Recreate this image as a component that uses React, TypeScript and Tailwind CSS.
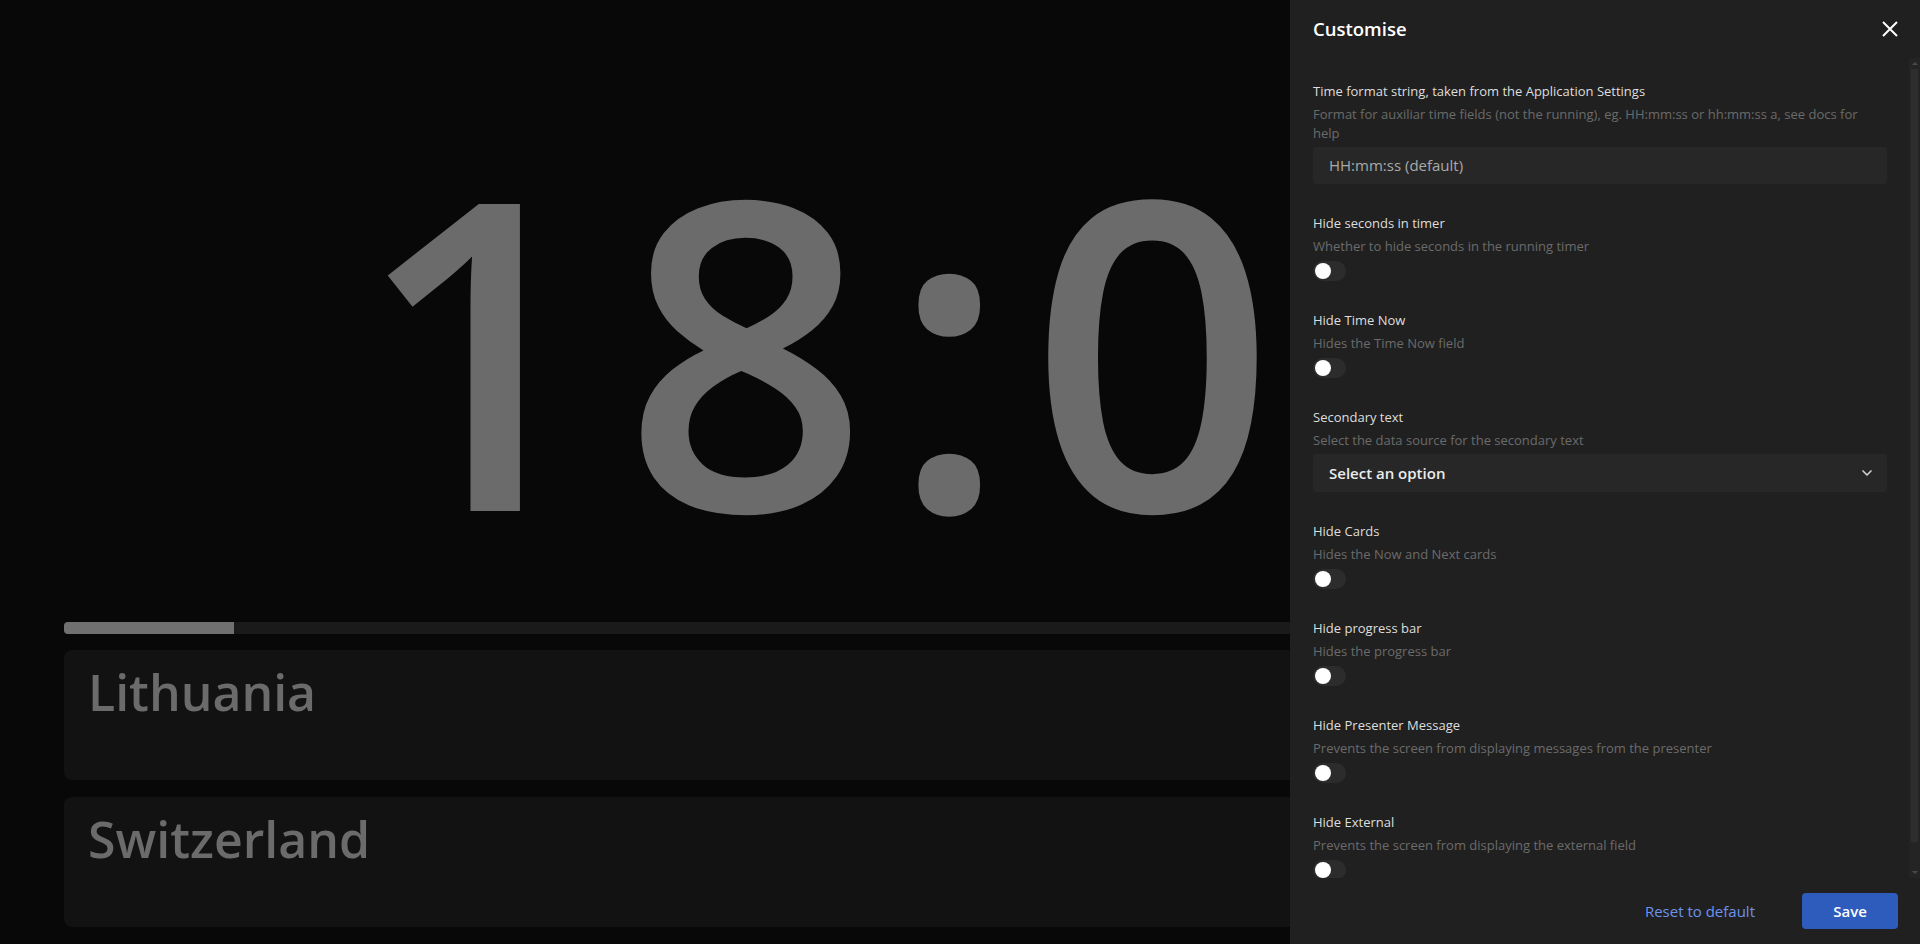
import { ChevronDown } from "lucide-react";

const fields = [
  { label: "Hide seconds in timer", desc: "Whether to hide seconds in the running timer" },
  { label: "Hide Time Now", desc: "Hides the Time Now field" },
];

const moreFields = [
  { label: "Hide Cards", desc: "Hides the Now and Next cards" },
  { label: "Hide progress bar", desc: "Hides the progress bar" },
  { label: "Hide Presenter Message", desc: "Prevents the screen from displaying messages from the presenter" },
  { label: "Hide External", desc: "Prevents the screen from displaying the external field" },
];

const Toggle = () => (
  <div className="mt-[5px] w-[33px] h-[20px] rounded-full bg-[#2c2c2c] flex items-center px-[2px]">
    <div className="w-[16px] h-[16px] rounded-full bg-white" />
  </div>
);

const FieldHead = ({ label, desc }: { label: string; desc: string }) => (
  <>
    <div className="text-[13px] leading-[20px] text-[#dedede]">{label}</div>
    <div className="mt-[4px] text-[13px] leading-[19px] text-[#6b6b6b]">{desc}</div>
  </>
);

const ToggleField = ({ label, desc }: { label: string; desc: string }) => (
  <div className="flex flex-col items-start">
    <FieldHead label={label} desc={desc} />
    <Toggle />
  </div>
);

const Card = ({ title }: { title: string }) => (
  <div className="h-[130px] rounded-lg bg-[#121212] px-6 pt-[5px]">
    <div className="text-[50px] font-semibold text-[#6b6b6b]">{title}</div>
  </div>
);

// drawn scrollbar, the drawer body is clipped like the original
const ScrollBar = () => (
  <div className="w-[11px] shrink-0 bg-[#242424] flex flex-col items-center">
    <div className="h-[11px] flex items-center justify-center">
      <div className="w-0 h-0 border-x-[3px] border-x-transparent border-b-[3px] border-b-[#4a4a4a]" />
    </div>
    <div className="w-[7px] h-[773px] bg-[#2e2e2e]" />
    <div className="flex-1" />
    <div className="h-[11px] flex items-center justify-center">
      <div className="w-0 h-0 border-x-[3px] border-x-transparent border-t-[3px] border-t-[#4a4a4a]" />
    </div>
  </div>
);

const App = () => {
  return (
    <div className="relative h-screen w-full overflow-hidden bg-[#080808] font-['Open_Sans',sans-serif]">
      {/* Timer view */}
      <div className="flex flex-col h-full px-16 pb-[17px]">
        <div className="flex-1 pt-[129px]">
          <div className="text-center text-[430px] leading-none font-semibold tracking-[0.05em] text-[#6b6b6b]">
            18:00
          </div>
        </div>
        <div className="h-3 w-full rounded-sm bg-[#1a1a1a] overflow-hidden">
          <div className="h-full w-[170px] bg-[#707070]" />
        </div>
        <div className="mt-4 flex flex-col gap-[17px]">
          <Card title="Lithuania" />
          <Card title="Switzerland" />
        </div>
      </div>

      {/* Customise drawer */}
      <div className="absolute top-0 right-0 h-full w-[630px] bg-[#202020] flex flex-col">
        <div className="h-[58px] shrink-0 pl-[23px] pr-[22px] flex items-center justify-between">
          <h2 className="text-[18.5px] font-semibold text-white">Customise</h2>
          <svg width="16" height="16" viewBox="0 0 16 16" className="text-white">
            <path d="M1 1L15 15M15 1L1 15" stroke="currentColor" strokeWidth="2" />
          </svg>
        </div>

        <div className="flex-1 min-h-0 flex">
          <div className="flex-1 overflow-hidden pl-[23px] pr-[22px] pt-[23px]">
            <div className="flex flex-col gap-[29px]">
              <div className="flex flex-col">
                <FieldHead
                  label="Time format string, taken from the Application Settings"
                  desc="Format for auxiliar time fields (not the running), eg. HH:mm:ss or hh:mm:ss a, see docs for help"
                />
                <div className="mt-[4px] h-[37px] rounded bg-[#272727] px-4 flex items-center text-[15px] text-[#a9a9a9]">
                  HH:mm:ss (default)
                </div>
              </div>

              {fields.map((f) => (
                <ToggleField key={f.label} {...f} />
              ))}

              <div className="flex flex-col">
                <FieldHead label="Secondary text" desc="Select the data source for the secondary text" />
                <div className="mt-[4px] h-[38px] rounded bg-[#272727] pl-4 pr-3 flex items-center justify-between">
                  <span className="text-[15px] font-semibold text-[#ececec]">Select an option</span>
                  <ChevronDown className="w-4 h-4 text-[#cfcfcf]" strokeWidth={2.5} />
                </div>
              </div>

              {moreFields.map((f) => (
                <ToggleField key={f.label} {...f} />
              ))}
            </div>
          </div>
          <ScrollBar />
        </div>

        <div className="h-[66px] shrink-0 flex items-center justify-end gap-[31px] pr-[22px]">
          <button className="px-4 text-[15px] text-[#6b93ee]">Reset to default</button>
          <button className="h-9 w-24 rounded bg-[#2e5cbd] text-[15px] font-semibold text-white">Save</button>
        </div>
      </div>
    </div>
  );
};

export default App;
